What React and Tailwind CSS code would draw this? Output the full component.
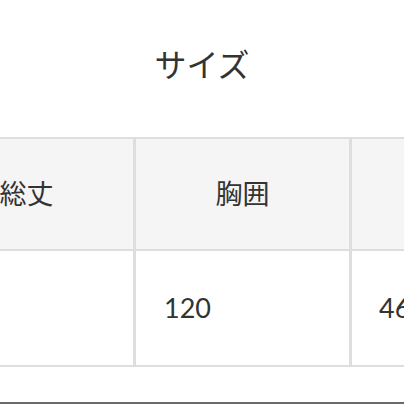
export default function App() {
  const font = { fontFamily: 'Lato, "Noto Sans CJK JP", sans-serif' };
  return (
    <div className="w-[404px] h-[404px] overflow-hidden bg-white relative" style={font}>
      <div className="h-[137px] flex items-center justify-center pb-[8px] text-[32px] text-[#333]">
        サイズ
      </div>
      <div className="ml-[-80px] w-[700px] border-t-2 border-[#dedede]">
        <div className="flex h-[112px] bg-[#f5f5f5] border-b-2 border-[#dedede] text-[27px] text-[#333]">
          <div className="w-[216px] shrink-0 border-r-[3px] border-[#dedede] flex items-center justify-center">総丈</div>
          <div className="w-[216px] shrink-0 border-r-[3px] border-[#dedede] flex items-center justify-center">胸囲</div>
          <div className="w-[216px] shrink-0 border-r-[3px] border-[#dedede] flex items-center justify-center">肩幅</div>
        </div>
        <div className="flex h-[116px] bg-white border-b-2 border-[#dedede] text-[27px] text-[#333]">
          <div className="w-[216px] shrink-0 border-r-[3px] border-[#dedede] flex items-center pl-[28px]">72</div>
          <div className="w-[216px] shrink-0 border-r-[3px] border-[#dedede] flex items-center pl-[28px]">120</div>
          <div className="w-[216px] shrink-0 border-r-[3px] border-[#dedede] flex items-center pl-[27px]">46</div>
        </div>
      </div>
      <div className="mt-[35px] h-[2px] bg-[#6b6b6b]"></div>
    </div>
  );
}
